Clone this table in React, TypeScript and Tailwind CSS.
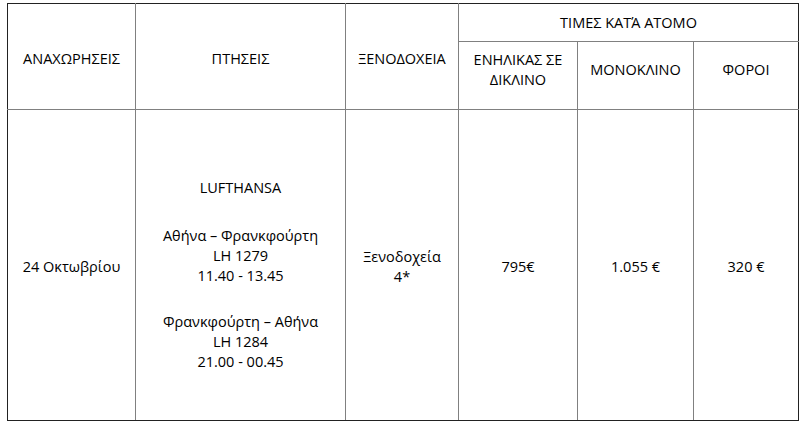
export default function App() {
  const cell = "border border-[#808080] text-center align-middle";
  return (
    <div className="w-[800px] h-[423px] bg-white pl-[7px] pt-[3px] font-['Open_Sans',sans-serif] text-[14.5px] font-medium text-black leading-[20px]">
      <table className="border-collapse border border-[#222] table-fixed w-[791px]">
        <colgroup>
          <col className="w-[128px]" />
          <col className="w-[210px]" />
          <col className="w-[113px]" />
          <col className="w-[119px]" />
          <col className="w-[116px]" />
          <col className="w-[105px]" />
        </colgroup>
        <tbody>
          <tr className="h-[38px]">
            <td rowSpan={2} className={`${cell} border-l-[#222] border-t-[#222] pt-1`}>ΑΝΑΧΩΡΗΣΕΙΣ</td>
            <td rowSpan={2} className={`${cell} border-t-[#222] pt-1`}>ΠΤΗΣΕΙΣ</td>
            <td rowSpan={2} className={`${cell} border-t-[#222] pt-1`}>ΞΕΝΟΔΟΧΕΙΑ</td>
            <td colSpan={3} className={`${cell} border-t-[#222] border-r-[#222]`}>ΤΙΜΕΣ ΚΑΤΆ ΑΤΟΜΟ</td>
          </tr>
          <tr className="h-[68px]">
            <td className={`${cell} px-3 pb-3`}>ΕΝΗΛΙΚΑΣ ΣΕ ΔΙΚΛΙΝΟ</td>
            <td className={`${cell} pb-3`}>ΜΟΝΟΚΛΙΝΟ</td>
            <td className={`${cell} border-r-[#222] pb-3`}>ΦΟΡΟΙ</td>
          </tr>
          <tr className="h-[311px]">
            <td className={`${cell} border-l-[#222] border-b-[#222] pt-1`}>24 Οκτωβρίου</td>
            <td className={`${cell} border-b-[#222]`}>
              <div className="h-[20px]" />
              <div>LUFTHANSA</div>
              <div className="h-[28px]" />
              <div>Αθήνα – Φρανκφούρτη</div>
              <div>LH 1279</div>
              <div>11.40 - 13.45</div>
              <div className="h-[26px]" />
              <div>Φρανκφούρτη – Αθήνα</div>
              <div>LH 1284</div>
              <div>21.00 - 00.45</div>
            </td>
            <td className={`${cell} border-b-[#222] px-3 pt-1`}>Ξενοδοχεία 4*</td>
            <td className={`${cell} border-b-[#222] pt-1`}>795€</td>
            <td className={`${cell} border-b-[#222] pt-1`}>1.055 €</td>
            <td className={`${cell} border-b-[#222] border-r-[#222] pt-1`}>320 €</td>
          </tr>
        </tbody>
      </table>
    </div>
  );
}
